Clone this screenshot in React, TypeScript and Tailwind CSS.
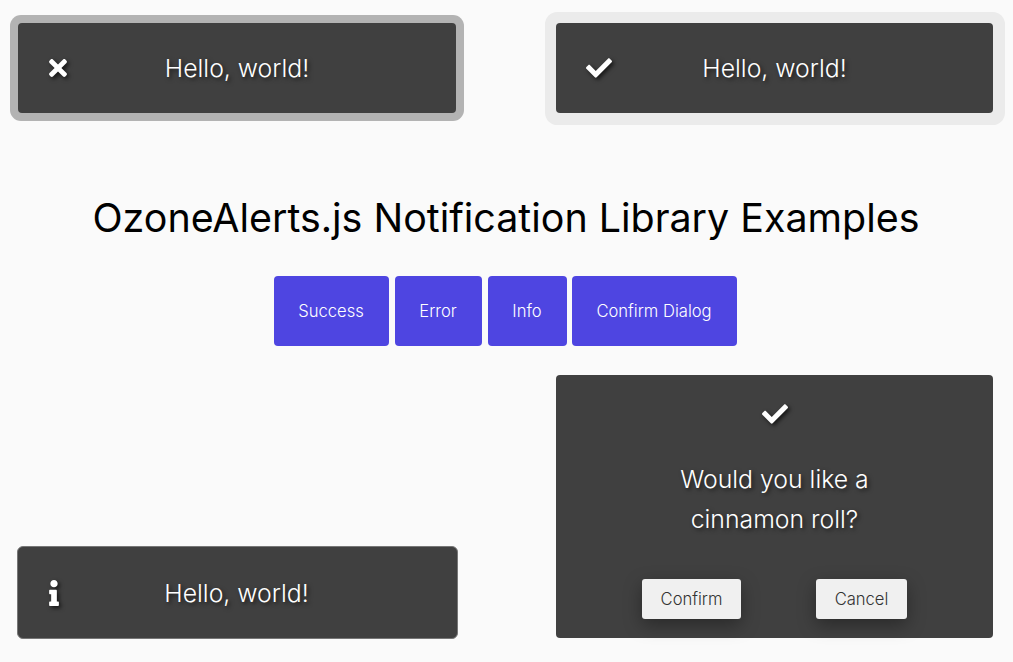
import { FaCheck, FaInfo, FaTimes } from "react-icons/fa";

const iconShadow = "drop-shadow-[2px_2px_2px_rgba(0,0,0,0.7)]";

function Toast({ icon, className }: { icon: React.ReactNode; className: string }) {
  return (
    <div className={`grid grid-cols-[1fr_auto_1fr] items-center rounded bg-[#404040] text-white ${className}`}>
      <div className="flex items-center">{icon}</div>
      <span className="text-[24.8px] leading-[32px] font-light [text-shadow:2px_2px_4px_rgba(0,0,0,0.6)]">Hello, world!</span>
      <div />
    </div>
  );
}

export default function App() {
  return (
    <main className="flex h-[662px] w-[1013px] flex-col overflow-hidden bg-[#fafafa] pt-[23px] font-['Inter',sans-serif]">
      <div className="flex justify-between pl-[18px] pr-[20px]">
        <Toast
          className="h-[90px] w-[438px] shadow-[0_0_0_8px_#b3b3b3]"
          icon={<FaTimes className={`ml-[27px] text-[26px] ${iconShadow}`} />}
        />
        <Toast
          className="h-[90px] w-[437px] shadow-[0.5px_0.5px_0_11.5px_#ebebeb]"
          icon={<FaCheck className={`ml-[30px] text-[26px] ${iconShadow}`} />}
        />
      </div>

      <h1 className="mt-[80px] pr-[1px] text-center text-[39.4px] leading-[50px] font-normal text-black">
        OzoneAlerts.js Notification Library Examples
      </h1>

      <div className="mt-[33px] flex justify-center pr-[3px] text-[16.6px] font-light text-white">
        <button className="h-[70px] w-[115px] rounded bg-[#4e45e1]">Success</button>
        <button className="ml-[6px] h-[70px] w-[87px] rounded bg-[#4e45e1]">Error</button>
        <button className="ml-[6px] h-[70px] w-[79px] rounded bg-[#4e45e1]">Info</button>
        <button className="ml-[5px] h-[70px] w-[165px] rounded bg-[#4e45e1]">Confirm Dialog</button>
      </div>

      <div className="mt-[29px] flex items-end justify-between pl-[17px] pr-[20px]">
        <Toast
          className="-mb-px h-[93px] w-[441px] rounded-md border border-[#777777] pr-[2px]"
          icon={<FaInfo className={`ml-[23px] text-[26px] ${iconShadow}`} />}
        />
        <div className="flex h-[263px] w-[437px] flex-col items-center rounded bg-[#404040] pt-[26px] text-white">
          <FaCheck className={`text-[26px] ${iconShadow}`} />
          <p className="mt-[32px] w-[240px] text-center text-[24.8px] leading-[40px] font-light [text-shadow:2px_2px_4px_rgba(0,0,0,0.6)]">
            Would you like a cinnamon roll?
          </p>
          <div className="mt-[40px] flex gap-[75px] text-[16.6px] font-light text-[#333333]">
            <button className="h-[40px] w-[99px] rounded-[3px] bg-[#f0f0f0] shadow-[0_6px_18px_rgba(0,0,0,0.35)]">Confirm</button>
            <button className="h-[40px] w-[91px] rounded-[3px] bg-[#f0f0f0] shadow-[0_6px_18px_rgba(0,0,0,0.35)]">Cancel</button>
          </div>
        </div>
      </div>
    </main>
  );
}
